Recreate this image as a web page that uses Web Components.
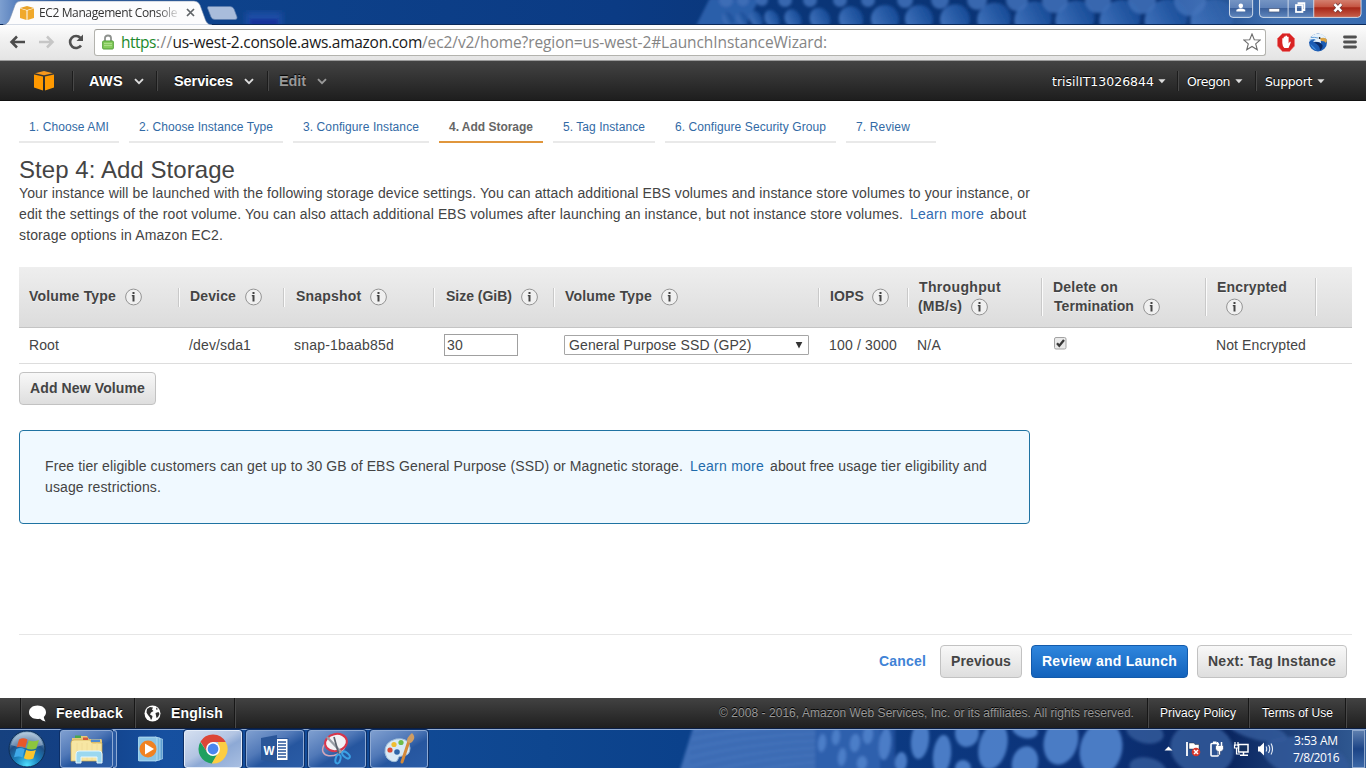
<!DOCTYPE html>
<html lang="en">
<head>
<meta charset="utf-8">
<title>EC2 Management Console</title>
<style>
html,body{margin:0;padding:0;width:1366px;height:768px;overflow:hidden;background:#fff}
body{font-family:"Liberation Sans",Arial,sans-serif}
</style>
</head>
<body>
<desktop-screen></desktop-screen>
<script>
class Base extends HTMLElement {
  connectedCallback() {
    if (this.shadowRoot) return;
    const root = this.attachShadow({ mode: 'open' });
    const t = document.createElement('template');
    t.innerHTML = '<style>*{box-sizing:border-box}svg{display:block;flex:none}' + this.css() + '</style>' + this.html();
    root.appendChild(t.content.cloneNode(true));
    this.ready && this.ready();
  }
  css() { return ''; }
  html() { return ''; }
}
const a = (el, n, d = '') => el.getAttribute(n) ?? d;

/* Single line of text tracked to a given width */
customElements.define('fit-text', class extends Base {
  css() { return ':host{display:inline-block;white-space:pre;flex:none}'; }
  html() { return '<slot></slot>'; }
  ready() {
    const w = +a(this, 'w', 0);
    if (!w) return;
    const nat = this.getBoundingClientRect().width;
    this.style.letterSpacing = ((w - nat) / this.textContent.length).toFixed(4) + 'px';
  }
});

/* Blue wallpaper with bokeh cells, seen through the window glass */
customElements.define('glass-wallpaper', class extends Base {
  css() { return ':host{display:block;position:absolute;inset:0;overflow:hidden}'; }
  html() {
    const bar = a(this, 'part-of');
    let s = '';
    if (bar === 'top') {
      const low = [[728,5],[742,5],[756,6],[772,7],[793,8],[820,10],[851,12],[885,14],[919,14],[955,15],[994,17],[1033,19],[1075,20],[1120,21],[1166,22],[1212,22]];
      const up = [[726,7],[743,6],[762,6],[785,7],[810,7],[840,7],[868,7],[905,8],[940,9],[977,10],[1017,11],[1055,13],[1098,13],[1142,14],[1190,16]];
      for (const [x, r] of low) s += `<ellipse cx="${x}" cy="19" rx="${r}" ry="${r * .65 + 5}" transform="rotate(-28 ${x} 19)" fill="url(#e)"/>`;
      for (const [x, r] of up) s += `<ellipse cx="${x}" cy="0" rx="${r}" ry="${r}" fill="#3f70b9" opacity=".85"/>`;
      return `<svg width="1366" height="25"><defs>
      <linearGradient id="g"><stop offset="0" stop-color="#0f468f"/><stop offset=".45" stop-color="#0b3b84"/><stop offset=".6" stop-color="#0a3577"/><stop offset=".85" stop-color="#0a3274"/><stop offset="1" stop-color="#1b5aa6"/></linearGradient>
      <linearGradient id="e"><stop offset="0" stop-color="#3f71ba"/><stop offset="1" stop-color="#164a96"/></linearGradient>
      <linearGradient id="l"><stop offset="0" stop-color="#7d9fd0"/><stop offset=".45" stop-color="#3f6bb0"/><stop offset="1" stop-color="#3f6bb0" stop-opacity="0"/></linearGradient>
      <linearGradient id="r"><stop offset="0" stop-color="#5f8ac8" stop-opacity="0"/><stop offset=".5" stop-color="#5c88c4" stop-opacity=".6"/><stop offset="1" stop-color="#3f6fb2" stop-opacity=".8"/></linearGradient>
      <filter id="b"><feGaussianBlur stdDeviation="1.8"/></filter><filter id="c"><feGaussianBlur stdDeviation="3"/></filter></defs>
      <rect width="1366" height="25" fill="url(#g)"/><rect width="60" height="25" fill="url(#l)"/>
      <rect x="246" y="12" width="36" height="18" fill="#1c4ea6" filter="url(#c)"/><rect x="250" y="19" width="28" height="7" fill="#17319a" filter="url(#b)"/>
      <g filter="url(#b)"><path d="M696 26L710-2H760L745 26z" fill="#2c5faa"/>${s}</g>
      <rect x="1180" width="186" height="25" fill="url(#r)"/></svg>`;
    }
    for (let i = 0; i < 7; i++) s += `<path d="M690 ${6 + i * 9}Q750 ${-6 + i * 8} 820 ${-6 + i * 7}" stroke="#2c5da8" stroke-width="2" fill="none" opacity=".4"/>`;
    const pts = [[822,14,4,9],[836,8,4,8],[842,28,4,9],[855,14,5,9],[862,34,5,7],[868,6,5,9],[885,15,6,16],[901,33,6,10],[920,11,9,19],[942,26,9,20],[967,4,12,14],[963,39,8,8],[993,17,14,24],[1025,1,13,8],[1025,34,13,17],[1061,12,17,24],[1101,20,21,28],[1145,3,19,11],[1148,40,19,11],[1202,20,32,26],[1258,2,30,9],[1306,30,44,20]];
    for (const [x, y, rx, ry] of pts) s += `<ellipse cx="${x}" cy="${y}" rx="${rx}" ry="${ry}" transform="rotate(${x > 980 ? 14 : 6} ${x} ${y})" fill="${x > 1120 ? '#34599a' : '#4e80c9'}" opacity="${x > 1120 ? .85 : .95}"/>`;
    return `<svg width="1366" height="40"><defs>
      <linearGradient id="g"><stop offset="0" stop-color="#16417f"/><stop offset=".06" stop-color="#123f85"/><stop offset=".12" stop-color="#1650a0"/><stop offset=".4" stop-color="#0e468f"/><stop offset=".5" stop-color="#0b418b"/><stop offset=".8" stop-color="#0c3278"/><stop offset=".9" stop-color="#0a2660"/><stop offset="1" stop-color="#335d96"/></linearGradient>
      <filter id="b"><feGaussianBlur stdDeviation="1.6"/></filter></defs>
      <rect width="1366" height="40" fill="url(#g)"/><g filter="url(#b)"><path d="M679 44L694-4H880V44z" fill="#4170b8"/><path d="M815-4H895V44H815z" fill="#265aa8" opacity=".7"/>${s}</g></svg>`;
  }
});

customElements.define('browser-titlebar', class extends Base {
  css() { return `
    :host{display:flex;position:relative;height:25px;width:1366px;overflow:hidden}
    .tab{position:relative;width:207px;height:25px;flex:none}
    .shape{position:absolute;left:0;top:0}
    .in{position:relative;display:flex;align-items:center;height:25px;padding-left:20px;font:12px "Open Sans","Noto Sans",sans-serif;color:#333}
    .in svg:first-child{margin-right:5px}
    .name{-webkit-mask-image:linear-gradient(90deg,#000 118px,#0003 137px);mask-image:linear-gradient(90deg,#000 118px,#0003 137px)}
    .x{margin-left:9px}
    .new{position:relative;margin-left:0}
    .btns{position:relative;display:flex;margin-left:auto;padding-right:2px}`; }
  html() { return `<glass-wallpaper part-of="top"></glass-wallpaper>
    <div class="tab"><svg class="shape" width="1366" height="25"><rect y="24" width="1366" height="1" fill="#0b2a5a"/><path d="M3 25C8 24 9 21 11 16L15 5Q16.500 1 21 1H194Q198 1 200 5L204 16C206 21 206 24 212 25z" fill="#fcfcfd" stroke="#7a8fae" stroke-width=".6"/></svg>
    <div class="in"><svg width="14" height="14" viewBox="0 0 14 14"><path d="M0 2.500L6.500 4.500V14L0 12zM14 2.500L7.500 4.500V14L14 12z" fill="#f0a92c"/><path d="M0 2L7 0L14 2L7 4z" fill="#e9a228"/></svg>
    <fit-text class="name" w="138">EC2 Management Console</fit-text>
    <svg class="x" width="9" height="9" viewBox="0 0 9 9"><path d="M1 1L8 8M8 1L1 8" stroke="#606468" stroke-width="1.700"/></svg></div></div>
    <svg class="new" width="32" height="25"><path d="M1 6.500H23Q26 6.500 27 9L30 17Q30.500 19.500 28 19.500H8Q5 19.500 4 17L.5 8z" fill="#a9bcdb" stroke="#5f7eae" stroke-width=".7"/></svg>
    <svg class="btns" width="138" height="20" viewBox="1228 0 138 20"><defs>
      <linearGradient id="b" x2="0" y2="1"><stop stop-color="#7a99c6"/><stop offset=".5" stop-color="#5f82b8"/><stop offset=".52" stop-color="#3a5f9a"/><stop offset="1" stop-color="#5f86bd"/></linearGradient>
      <linearGradient id="r" x2="0" y2="1"><stop stop-color="#d88b7b"/><stop offset=".45" stop-color="#c55542"/><stop offset=".5" stop-color="#a72617"/><stop offset="1" stop-color="#c8614c"/></linearGradient></defs>
      <path d="M1229.500-2V14Q1229.500 17.500 1233 17.500H1249.500Q1253 17.500 1253 14V-2z" fill="url(#b)" stroke="#d0dcec"/>
      <path d="M1260-2V14Q1260 17.500 1263.500 17.500H1315V-2z" fill="url(#b)"/><path d="M1315-2V17.500H1359Q1363 17.500 1363 14V-2z" fill="url(#r)"/>
      <path d="M1260-2V14Q1260 17.500 1263.500 17.500H1359.500Q1363 17.500 1363 14V-2M1289-1V17M1315-1V17" fill="none" stroke="#cfdaea"/>
      <circle cx="1241" cy="5.800" r="2.300" fill="#fff"/><path d="M1236.500 11.500V9.800Q1241 7 1245.500 9.800V11.500z" fill="#fff"/>
      <rect x="1269.500" y="8.500" width="11" height="3.500" fill="#fff" stroke="#46587a" stroke-width=".7"/>
      <g fill="none" stroke="#fff" stroke-width="1.800"><path d="M1299.500 4V3H1305.500V10H1304"/><rect x="1297" y="5" width="6.500" height="7"/></g>
      <path d="M1336 4L1343 11.500M1343 4L1336 11.500" stroke="#6a3838" stroke-width="4"/><path d="M1336 4L1343 11.500M1343 4L1336 11.500" stroke="#fff" stroke-width="2.600"/></svg>`; }
});

customElements.define('browser-toolbar', class extends Base {
  css() { return `
    :host{display:flex;align-items:center;height:36px;background:linear-gradient(#fdfdfd,#f1f1f1 40%,#e4e4e4);border-bottom:1px solid #9c9c9c;padding:0 9px 1px 9px}
    .fwd{margin-left:12px}.rel{margin-left:12px}
    .url{display:flex;align-items:center;height:27px;width:1173px;margin-left:9px;border:1px solid #b3b3ae;border-top-color:#9e9e98;border-radius:3px;background:#fff;padding:0 4px 0 7px;font:15.500px/24px "Open Sans","Noto Sans",sans-serif;color:#1a1a1a}
    .lock{margin-right:7px}.g{color:#1c8a2c}.m{color:#858585}
    .star{margin-left:auto}
    .e1{margin-left:11px}.e2{margin-left:13px}.menu{margin-left:15px}`; }
  html() { return `
    <svg width="17" height="14" viewBox="0 0 17 14"><path d="M8 1.500L2.500 7L8 12.500M3 7H16" fill="none" stroke="#4c4c4c" stroke-width="2.500"/></svg>
    <svg class="fwd" width="17" height="14" viewBox="0 0 17 14"><path d="M9 1.500L14.500 7L9 12.500M14 7H1" fill="none" stroke="#c6c6c6" stroke-width="2.500"/></svg>
    <svg class="rel" width="18" height="16" viewBox="0 0 18 16"><path d="M14 11.500A6 6 0 1 1 13.500 4" fill="none" stroke="#505050" stroke-width="2.600"/><path d="M16 .5V7H9.500z" fill="#505050"/></svg>
    <div class="url"><svg class="lock" width="12" height="16" viewBox="0 0 12 16"><path d="M3 8V4Q3 1.500 6 1.500T9 4V8" fill="none" stroke="#8d918d" stroke-width="1.800"/><rect x=".7" y="7" width="10.600" height="8" rx=".8" fill="#86cc5d" stroke="#4f9f34"/><path d="M2 9.500H10M2 11.500H10" stroke="#aade88"/></svg>
    <fit-text class="g" w="35">https</fit-text><fit-text class="m" w="16.500">://</fit-text><fit-text w="249.500">us-west-2.console.aws.amazon.com</fit-text><fit-text class="m" w="405">/ec2/v2/home?region=us-west-2#LaunchInstanceWizard:</fit-text>
    <svg class="star" width="18" height="18" viewBox="0 0 18 18"><path d="M9 1L11.300 6.700L17.200 7L12.700 10.900L14.300 16.800L9 13.500L3.700 16.800L5.300 10.900L.8 7L6.700 6.700z" fill="#fff" stroke="#6b6b6b" stroke-width="1.100"/></svg></div>
    <svg class="e1" width="18" height="19" viewBox="0 0 18 19"><path d="M5.500 .5H12.500L17.500 5.500V13L12.500 18.500H5.500L.5 13V5.500z" fill="#d92323" stroke="#e77" stroke-width=".6"/><path d="M5.300 10V5.500Q6 4.500 6.700 5.500V9V4Q7.500 3 8.300 4V8.500V3Q9.200 2.200 10 3V8.500V4Q10.800 3.200 11.600 4V10.500L13 8.500Q14.200 8.500 13.600 10L11.500 15H7.300Q5.500 13.500 5.300 10z" fill="#fff"/></svg>
    <svg class="e2" width="20" height="19" viewBox="0 0 20 19"><circle cx="10" cy="9.500" r="9" fill="#1b5cb4"/><path d="M1.500 6Q5 0 11 .8Q16 1 18.200 5.500L14 6Q12 8 13 10Q9 8 5 9Q8 6 6 6Q3 6 1 9z" fill="#e6f1fa"/><path d="M3 4.500Q7 4 10 5M2 7Q5 6.500 7.500 7" stroke="#5a9ad8" stroke-width=".9" fill="none"/><path d="M12 5.200Q17 3.600 18.800 6.500Q19 8.500 18 10Q17 7.800 13 8z" fill="#dca445"/><circle cx="11.600" cy="5" r=".9" fill="#222"/><path d="M6 9.500Q11 8 14.500 12Q15 15 12 17.500Q12 12 6 9.500z" fill="#0a2a66"/><path d="M2.500 11Q4 16 9 17.500Q5 13 2.500 11z" fill="#3f8fe0"/></svg>
    <svg class="menu" width="14" height="14" viewBox="0 0 14 14"><path d="M1.500 2H12.500M1.500 7H12.500M1.500 12H12.500" stroke="#505050" stroke-width="2.800" stroke-linecap="round"/></svg>`; }
});

customElements.define('nav-caret', class extends Base {
  css() { return ':host{display:block;flex:none;color:#ddd}'; }
  html() { return this.hasAttribute('solid') ? '<svg width="8" height="5"><path d="M.3 .3H7.500L3.900 4.300z" fill="currentColor"/></svg>'
    : '<svg width="10" height="7"><path d="M1 1.200L5 5.200L9 1.200" fill="none" stroke="currentColor" stroke-width="1.900"/></svg>'; }
});

customElements.define('aws-navbar', class extends Base {
  css() { return `
    :host{display:flex;align-items:center;height:40px;background:linear-gradient(#434343,#1e1e1e);border-bottom:1px solid #111;color:#fff;font:bold 14.500px "Liberation Sans",Arial,sans-serif;padding:1px 0 0 33px;text-shadow:0 -1px 1px #000}
    i{width:1px;height:20px;background:#1c1c1c;box-shadow:1px 0 #484848;flex:none}
    .r{display:flex;align-items:center;margin-left:auto;padding-right:41px;font:12.500px "DejaVu Sans",Verdana,sans-serif}
    .dim{color:#999}`; }
  html() { return `<svg width="22" height="20" viewBox="0 0 22 20"><path d="M1 3.500L10 5.500V19.500L1 16.500zM21 3.500L12 5.500V19.500L21 16.500z" fill="#f90"/><path d="M2 2.200L11 0L20 2.200L11 4.200z" fill="#f7981d"/></svg>
    <i style="margin-left:17px"></i><fit-text w="34" style="margin-left:16px">AWS</fit-text><nav-caret style="margin-left:11px"></nav-caret>
    <i style="margin-left:12px"></i><fit-text w="59" style="margin-left:17px">Services</fit-text><nav-caret style="margin-left:11px"></nav-caret>
    <i style="margin-left:13px"></i><fit-text class="dim" w="27" style="margin-left:11px">Edit</fit-text><nav-caret class="dim" style="margin-left:11px"></nav-caret>
    <div class="r"><fit-text w="102">trisilIT13026844</fit-text><nav-caret solid style="margin-left:4px"></nav-caret>
    <i style="margin-left:11px"></i><fit-text w="43" style="margin-left:9px">Oregon</fit-text><nav-caret solid style="margin-left:5px"></nav-caret>
    <i style="margin-left:12px"></i><fit-text w="47" style="margin-left:9px">Support</fit-text><nav-caret solid style="margin-left:5px"></nav-caret></div>`; }
});

customElements.define('wizard-step', class extends Base {
  css() { return `:host{display:flex;align-items:center;height:32px;flex:none;padding:1px 0 0 10px;border-bottom:2px solid #e9e9e9;font-size:12px;color:#326aa5;box-sizing:border-box}
    :host([active]){border-color:#e0963c;font-weight:bold;color:#666}`; }
  html() { return `<fit-text w="${a(this, 'w')}">${a(this, 'label')}</fit-text>`; }
  ready() { this.style.width = a(this, 'box') + 'px'; }
});
customElements.define('wizard-steps', class extends Base {
  css() { return ':host{display:flex;gap:10px;padding:10px 19px 0;height:42px;box-sizing:border-box}'; }
  html() {
    return [['1. Choose AMI',80,100],['2. Choose Instance Type',134,154],['3. Configure Instance',116,136],['4. Add Storage',84,104,1],['5. Tag Instance',82,102],['6. Configure Security Group',151,171],['7. Review',54,90]]
      .map(([l, w, b, on]) => `<wizard-step label="${l}" w="${w}" box="${b}" ${on ? 'active' : ''}></wizard-step>`).join('');
  }
});

customElements.define('info-icon', class extends Base {
  css() { return ':host{display:block;flex:none}'; }
  html() { return '<svg width="18" height="18" viewBox="0 0 18 18"><circle cx="9.500" cy="9" r="7.900" fill="#f0f0f0" stroke="#949494"/><path d="M8.500 4H10.500V6H8.500zM7.800 7H10.500V13.500H8.500V8.200H7.800z" fill="#444"/></svg>'; }
});

customElements.define('storage-table', class extends Base {
  css() { return `
    :host{display:block;font-size:14px;color:#444}
    .h,.b{display:grid;grid-template-columns:160px 105px 150px 120px 265px 89px 134px 164px 110px 36px;align-items:center}
    .h{height:61px;background:linear-gradient(#eee,#dcdcdc);border-bottom:1px solid #c4c4c4;font-weight:bold;text-shadow:0 1px #fff8;line-height:19px}
    .c{display:flex;flex-direction:column;justify-content:center;height:19px;border-right:1px solid #c9c9c9;box-shadow:1px 0 #fbfbfb;padding-left:11px}
    .c:first-child{padding-left:10px}.c:last-child{border:0;box-shadow:none}
    .t{height:38px}
    .l{display:flex;align-items:center;height:19px}
    .one{padding-bottom:2px}.one info-icon{margin-top:1px}
    .b{height:36px;border-bottom:1px solid #ddd;padding-bottom:2px}
    .b>*{padding-left:10px}
    .in{width:84px}.in div{width:74px;height:22px;border:1px solid #a0a0a0;display:flex;align-items:center;padding-left:2px}
    .sel div{width:245px;height:20px;border:1px solid #a6a6a6;border-radius:1px;display:flex;align-items:center;justify-content:space-between;padding:0 5px 0 4px}
    .ck{padding-left:12px;padding-bottom:3px}`; }
  html() {
    const h = (t, w, m, o = 0) => `<div class="c"><div class="l one" style="margin-left:${o}px"><fit-text w="${w}">${t}</fit-text><info-icon style="margin-left:${m}px"></info-icon></div></div>`;
    const h2 = (t, w, u, w2, m, o = 0) => `<div class="c t"><div class="l"><fit-text w="${w}">${t}</fit-text></div><div class="l" style="margin-left:${o}px">${u ? `<fit-text w="${w2}">${u}</fit-text>` : ''}<info-icon style="margin-left:${m}px"></info-icon></div></div>`;
    return `<div class="h">${h('Volume Type', 87, 8)}${h('Device', 46, 8)}${h('Snapshot', 65.500, 7.500, 1)}${h('Size (GiB)', 66, 8, 1)}${h('Volume Type', 87, 8)}${h('IOPS', 34, 7)}
      ${h2('Throughput', 82, '(MB/s)', 44, 8, -1)}${h2('Delete on', 65, 'Termination', 80, 8, 1)}${h2('Encrypted', 70, '', 0, 8)}<div class="c"></div></div>
      <div class="b"><div><fit-text w="30">Root</fit-text></div><div><fit-text w="62">/dev/sda1</fit-text></div><div><fit-text w="100">snap-1baab85d</fit-text></div>
      <div class="in"><div><fit-text w="16">30</fit-text></div></div>
      <div class="sel"><div><fit-text w="182.500">General Purpose SSD (GP2)</fit-text><svg width="8" height="8"><path d="M.7 1H7.300L4 7.500z" fill="#333"/></svg></div></div>
      <div><fit-text w="68">100 / 3000</fit-text></div><div style="padding-left:9px"><fit-text w="24">N/A</fit-text></div>
      <div class="ck"><svg width="13" height="13" viewBox="0 0 13 13"><rect x=".5" y=".5" width="11.500" height="11.500" rx="1.500" fill="#e9e9e9" stroke="#a3a3a3"/><path d="M3 6.200L5.300 8.800L10 3" fill="none" stroke="#383838" stroke-width="2.300"/></svg></div>
      <div><fit-text w="90">Not Encrypted</fit-text></div><div></div></div>`;
  }
});

customElements.define('aws-button', class extends Base {
  css() { return `:host{display:flex;align-items:center;justify-content:center;height:33px;flex:none;border:1px solid #c2c2c2;border-radius:4px;background:linear-gradient(#f8f8f8,#dedede);color:#444;font:bold 14px "Liberation Sans",Arial,sans-serif;box-sizing:border-box;padding-bottom:2px}
    :host([primary]){background:linear-gradient(#2f86dd,#1262bc);border-color:#125aab;color:#fff}`; }
  html() { return `<fit-text w="${a(this, 'w')}">${a(this, 'label')}</fit-text>`; }
  ready() { this.style.width = a(this, 'box') + 'px'; }
});

customElements.define('free-tier-note', class extends Base {
  css() { return `:host{display:block;width:1011px;height:94px;box-sizing:border-box;border:1px solid #1f73a2;border-radius:4px;background:#f0f9ff;padding:25px;font-size:14px;line-height:21px;color:#444}
    div{display:flex}a{color:#1f6bab;margin:0 6px 0 7px;display:flex}`; }
  html() { return `<div><fit-text w="638">Free tier eligible customers can get up to 30 GB of EBS General Purpose (SSD) or Magnetic storage.</fit-text><a><fit-text w="74">Learn more</fit-text></a><fit-text w="217">about free usage tier eligibility and</fit-text></div><div><fit-text w="116">usage restrictions.</fit-text></div>`; }
});

customElements.define('storage-page', class extends Base {
  css() { return `
    :host{display:flex;flex-direction:column;height:597px;background:#fff;color:#444}
    .main{padding:14px 14px 0 19px}
    h1{margin:0;font:24px/26px "Liberation Sans",Arial,sans-serif;height:26px}
    .p{font-size:14px;line-height:21px}
    .p div{display:flex}
    .p a{color:#326bb0;margin:0 6px 0 7px;display:flex}
    storage-table{margin-top:21px}.add{margin-top:8px}free-tier-note{margin-top:25px}
    .act{display:flex;align-items:center;justify-content:flex-end;margin:auto 14px 20px 19px;border-top:1px solid #e6e6e6;height:44px;padding:10px 5px 0 0}
    .cancel{font-weight:bold;font-size:14px;color:#3f83d6;margin:0 14px 2px 0}
    .act aws-button+aws-button{margin-left:9px}`; }
  html() { return `<wizard-steps></wizard-steps><div class="main"><h1><fit-text w="216">Step 4: Add Storage</fit-text></h1>
    <div class="p"><div><fit-text w="1011">Your instance will be launched with the following storage device settings. You can attach additional EBS volumes and instance store volumes to your instance, or</fit-text></div>
    <div><fit-text w="884">edit the settings of the root volume. You can also attach additional EBS volumes after launching an instance, but not instance store volumes.</fit-text><a><fit-text w="74">Learn more</fit-text></a><fit-text w="36.500">about</fit-text></div>
    <div><fit-text w="204">storage options in Amazon EC2.</fit-text></div></div>
    <storage-table></storage-table><aws-button class="add" box="137" w="115" label="Add New Volume"></aws-button><free-tier-note></free-tier-note></div>
    <div class="act"><fit-text class="cancel" w="47">Cancel</fit-text><aws-button box="82" w="60" label="Previous"></aws-button><aws-button primary box="157" w="135" label="Review and Launch"></aws-button><aws-button box="150" w="128" label="Next: Tag Instance"></aws-button></div>`; }
});

customElements.define('aws-footer', class extends Base {
  css() { return `
    :host{display:flex;align-items:center;height:30px;background:linear-gradient(#424242,#1f1f1f);color:#fff;font:bold 14px "Liberation Sans",Arial,sans-serif;padding-left:20px;text-shadow:0 -1px #000}
    i{width:1px;height:30px;background:#171717;box-shadow:1px 0 #484848;flex:none}
    .r{display:flex;align-items:center;margin-left:auto;padding-right:20px;font-weight:normal;font-size:12px}`; }
  html() { return `<i></i><svg style="margin-left:8px" width="18" height="17" viewBox="0 0 18 17"><path d="M8.500 .5C13.500 .5 17 3.400 17 7.300C17 9.500 16 11 14.800 12Q15 14.500 16.500 16.500Q13 16 11 13.700C5 15 0 12 0 7.300C0 3.400 3.500 .5 8.500 .5z" fill="#fff"/></svg>
    <fit-text w="67" style="margin-left:9px">Feedback</fit-text><i style="margin-left:11px"></i>
    <svg style="margin-left:9px" width="17" height="17" viewBox="0 0 17 17"><circle cx="8.500" cy="8.500" r="8" fill="#fff"/><path d="M3 4L6 2L9 2.500L8 4.500L9.500 6L7 7.500L6 9.500L8.500 11L8 13.500L7 15L6 12.500L4 10L2.500 7.500zM12 2.500L14 4L12.500 5zM11.500 8L14.500 7L15.500 9L14 12L12.500 13L12 10.500z" fill="#303030"/></svg>
    <fit-text w="52" style="margin-left:10px">English</fit-text><i style="margin-left:11px"></i>
    <div class="r"><fit-text w="415" style="color:#999">© 2008 - 2016, Amazon Web Services, Inc. or its affiliates. All rights reserved.</fit-text><i style="margin-left:13px"></i><fit-text w="76" style="margin-left:12px">Privacy Policy</fit-text><i style="margin-left:12px"></i><fit-text w="71" style="margin-left:13px">Terms of Use</fit-text><i style="margin-left:12px"></i></div>`; }
});

customElements.define('task-button', class extends Base {
  css() { return `:host{display:flex;align-items:center;justify-content:center;width:58px;height:38px;flex:none;box-sizing:border-box;border:1px solid #8eaad4;border-radius:3px;background:linear-gradient(150deg,#7f9fd0 0,#5179b8 40%,#26569f 60%,#2a5ca6);box-shadow:0 0 0 1px #0d2f66}
    :host([active]){background:linear-gradient(150deg,#d4dff0,#b3c5e3 45%,#8da9d5 60%,#a9bfe2);border-color:#e4ecf8}
    :host([plain]){background:none;border-color:transparent;box-shadow:none}`; }
  html() { return '<slot></slot>'; }
});

customElements.define('windows-taskbar', class extends Base {
  css() { return `
    :host{display:block;position:relative;height:40px;overflow:hidden;border-top:1px solid #0a1e44}
    .bar{position:relative;display:flex;align-items:center;height:39px;border-top:1px solid #8fabd4;padding-left:8px}
    .orb{margin-right:14px}
    task-button+task-button{margin-left:4px}
    .exp{width:53px}.stack{width:4px;height:38px;border:1px solid #8eaad4;border-left:0;border-radius:0 3px 3px 0;background:#2b5ba3}
    .stack+task-button{margin-left:5px}
    .tray{display:flex;align-items:center;margin-left:auto;padding-right:1px}
    .clock{display:flex;flex-direction:column;align-items:center;font:12px/17px "Open Sans","Noto Sans",sans-serif;color:#fff;margin-left:20px;width:46px}
    .show{width:13px;height:38px;border:1px solid #8fa8cc;background:linear-gradient(#5d7eae,#1c4486 50%,#3b67a6);margin-left:13px}`; }
  html() { return `<glass-wallpaper part-of="bottom"></glass-wallpaper><div class="bar">
    <svg class="orb" width="38" height="38" viewBox="0 0 38 38"><defs><radialGradient id="o" cx=".5" cy=".95" r=".9"><stop stop-color="#4fe0ff"/><stop offset=".35" stop-color="#1c86c0"/><stop offset=".7" stop-color="#1f4f86"/><stop offset="1" stop-color="#8fb0cc"/></radialGradient></defs>
      <circle cx="19" cy="19" r="18" fill="url(#o)" stroke="#0d2e55"/><path d="M3 15A16.500 16.500 0 0 1 35 15Q19 21 3 15z" fill="#fff" opacity=".33"/>
      <path d="M11 9.500Q15 7 19.500 9.500L17.200 18Q13 15.500 8.700 17.500z" fill="#e8582a"/><path d="M20.800 10.300Q25 12.500 31 10L28.300 18.500Q23.500 20.500 18.500 18.500z" fill="#8cc63e"/><path d="M8.300 19Q12.500 17 16.700 19.300L14.500 27.500Q11 25.500 6 27.300z" fill="#3fa9e8"/><path d="M18.200 20Q23 22 27.800 20L25.300 28.500Q20.500 30.500 15.900 28.200z" fill="#fbc52c"/></svg>
    <task-button class="exp"><svg width="34" height="30" viewBox="0 0 34 30"><path d="M2 4H8L10 2H17L19 5H31Q32 5 32 7V26H2z" fill="#e6c979"/><path d="M1 9Q1 6 4 6H20L22 9H32V27H1z" fill="#f7e6a3" stroke="#cda94d" stroke-width=".7"/><rect x="5" y="1.500" width="6" height="2.500" fill="#4aa84a"/><rect x="13" y="3.500" width="5" height="2.500" fill="#d4563a"/><rect x="21" y="5.500" width="9" height="2.500" fill="#4e8bd0"/><path d="M7 9V26M12 9V26M17 9V26M22 9V26M27 9V26" stroke="#f0dc98"/><path d="M6 29V20Q6 17 9 17H29Q32 17 32 20V29H27V23H11V29z" fill="#9bd8f0" stroke="#e5f7ff"/></svg></task-button><div class="stack"></div>
    <task-button plain><svg width="26" height="26" viewBox="0 0 26 26"><path d="M19 2L24.500 3V23L19 24z" fill="#5e9fd0" stroke="#b9dff3" stroke-width=".6"/><path d="M17 1L22 2V24L17 25z" fill="#7ab9df" stroke="#d0ecfa" stroke-width=".6"/><rect y="1" width="19" height="24" rx="1.500" fill="#8bc5e6" stroke="#c6e9f8" stroke-width=".7"/><circle cx="10" cy="13" r="8.500" fill="#f08222"/><path d="M7 7.500L16 13L7 18.500z" fill="#fff"/></svg></task-button>
    <task-button active><svg width="30" height="30" viewBox="0 0 30 30"><path d="M2.300 8A14.500 14.500 0 0 0 14 29.500L20.500 18.500L9.500 18.500z" fill="#1fa05f"/><path d="M27.700 8A14.500 14.500 0 0 1 13.800 29.500L21 17L20 8z" fill="#fccd42"/><path d="M15 8H27.700A14.500 14.500 0 0 0 2.500 7.500L9 18z" fill="#dc4637"/><circle cx="15" cy="15" r="6.900" fill="#fff"/><circle cx="15" cy="15" r="5.400" fill="#4a86ee"/></svg></task-button>
    <task-button><svg width="30" height="28" viewBox="0 0 30 28"><rect x="15" y="3.500" width="13" height="22" fill="#fff" stroke="#2a5699"/><path d="M18 7H26M18 10H26M18 13H26M18 16H26M18 19H26M18 22H26" stroke="#2a5699" stroke-width="1.300"/><path d="M1 3L17 0V28L1 25z" fill="#2a5699"/><text x="3.500" y="19.500" font-family="Liberation Sans" font-weight="bold" font-size="13" textLength="11" lengthAdjust="spacingAndGlyphs" fill="#fff">W</text></svg></task-button>
    <task-button><svg width="32" height="34" viewBox="0 0 32 34"><ellipse cx="13" cy="15" rx="12" ry="8" fill="none" stroke="#d3a6b9" stroke-width="1.500" transform="rotate(-25 13 15)"/><ellipse cx="15" cy="10.500" rx="11" ry="8.500" fill="#f2f2f5" stroke="#d8364b" stroke-width="2" transform="rotate(-12 15 10.500)"/><path d="M6 5L21 21" stroke="#989ea6" stroke-width="2.300"/><path d="M13 5L18 23" stroke="#5b626c" stroke-width="1.700"/><g fill="none" stroke="#3ba0e4" stroke-width="2"><ellipse cx="17" cy="27" rx="2.400" ry="4.500" transform="rotate(15 17 27)"/><ellipse cx="25" cy="23" rx="2.400" ry="4.500" transform="rotate(-50 25 23)"/></g></svg></task-button>
    <task-button><svg width="34" height="32" viewBox="0 0 34 32"><path d="M3 20Q2 9 14 6Q27 4 28 15Q28 23 20 23Q16 23 16 26Q15 30 9 28Q4 26 3 20z" fill="#d8e9f5" stroke="#9dbcd8"/><circle cx="8" cy="17" r="2.600" fill="#d94a35"/><circle cx="12" cy="11.500" r="2.600" fill="#efbd31"/><circle cx="19" cy="9.500" r="2.600" fill="#6ebc49"/><circle cx="15" cy="19" r="2.800" fill="#2f66a8"/><path d="M20 29L27 8" stroke="#d48a3a" stroke-width="3" stroke-linecap="round"/><path d="M25 9Q24 5 30 0Q33 3 32 6Q30 10 28 10z" fill="#cf9d63"/></svg></task-button>
    <div class="tray"><svg width="110" height="18" viewBox="1163 0 110 18"><path d="M1164.500 10.500L1168.500 6.500L1172.500 10.500z" fill="#fff"/>
      <path d="M1187 2V16" stroke="#fff" stroke-width="1.800"/><path d="M1189 3H1194L1195 4.500H1199V10H1194L1193 9H1189z" fill="#fff" stroke="#222" stroke-width=".4"/><circle cx="1196" cy="12" r="4.300" fill="#d8372b"/><path d="M1194 10L1198 14M1198 10L1194 14" stroke="#fff" stroke-width="1.500"/>
      <rect x="1211" y="3.500" width="7.500" height="12.500" rx="1" fill="none" stroke="#fff" stroke-width="1.600"/><rect x="1213" y="1.500" width="3.500" height="1.500" fill="#fff"/><path d="M1215.500 5.500H1223.500V8.500Q1223 11.500 1220.500 11.500V15H1218.500V11.500Q1216 11.500 1215.500 8.500z" fill="#fff" stroke="#223b6b" stroke-width=".6"/><path d="M1217.500 2V6M1221.500 2V6" stroke="#fff" stroke-width="1.500"/>
      <rect x="1238.500" y="4.500" width="9.500" height="7.500" fill="#14305f" stroke="#fff" stroke-width="1.500"/><path d="M1240 15.300H1248M1243.500 12V15" stroke="#fff" stroke-width="1.500"/><path d="M1235 2V6M1238 2V6M1234.500 5H1238.500V8H1234.500zM1236.500 8V14H1240" fill="none" stroke="#fff" stroke-width="1.200"/>
      <path d="M1258 6.500H1260L1264 2.500V15.500L1260 11.500H1258z" fill="#fff"/><path d="M1266 6.500Q1267.500 9 1266 11.500M1268.500 5Q1271 9 1268.500 13M1271 3.500Q1274 9 1271 14.500" fill="none" stroke="#e6edf7" stroke-width="1.100"/></svg>
      <div class="clock"><fit-text w="44">3:53 AM</fit-text><fit-text w="46">7/8/2016</fit-text></div><div class="show"></div></div></div>`; }
});

customElements.define('desktop-screen', class extends Base {
  css() { return ':host{display:flex;flex-direction:column;width:1366px;height:768px;overflow:hidden;font-family:"Liberation Sans",Arial,sans-serif}*{flex-shrink:0}'; }
  html() { return '<browser-titlebar></browser-titlebar><browser-toolbar></browser-toolbar><aws-navbar></aws-navbar><storage-page></storage-page><aws-footer></aws-footer><windows-taskbar></windows-taskbar>'; }
});
</script>
</body>
</html>
